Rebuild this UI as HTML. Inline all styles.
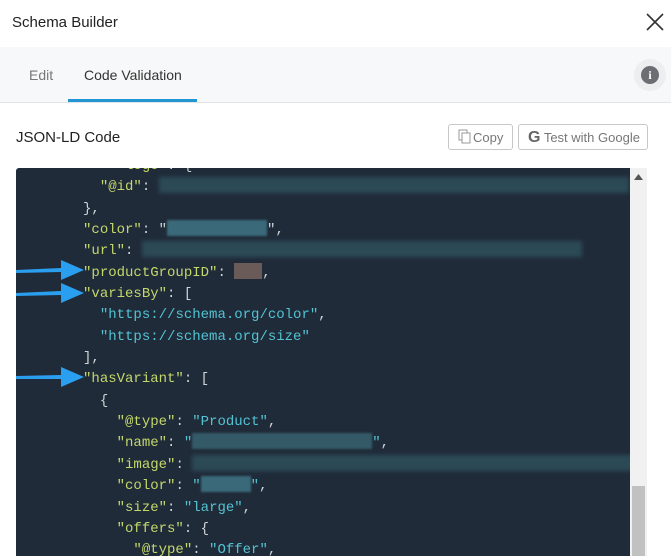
<!DOCTYPE html>
<html><head><style>
body{margin:0;width:671px;height:556px;overflow:hidden;font-family:"Liberation Sans",sans-serif;background:#fff;position:relative}
.hdr{position:absolute;left:0;top:0;width:671px;height:47px;background:#fff}
.title{position:absolute;left:12px;top:14px;font-size:15px;color:#222}
.close{position:absolute;left:645px;top:12px}
.tabs{position:absolute;left:0;top:47px;width:671px;height:55px;background:#f7f8f9;border-bottom:1px solid #e2e4e6}
.tab{position:absolute;top:20px;font-size:14px}
.ul{position:absolute;left:68px;top:52px;width:129px;height:3px;background:#2196d3}
.info{position:absolute;left:634px;top:12px;width:32px;height:32px;border-radius:50%;background:#eceeef}
.info div{position:absolute;left:7px;top:7px;width:18px;height:18px;border-radius:50%;background:#6b6f73;color:#fff;font:bold 12px "Liberation Serif",serif;text-align:center;line-height:18px}
.h2{position:absolute;left:16px;top:129px;font-size:15px;color:#222}
.btn{position:absolute;top:124px;height:26px;border:1px solid #c6c8ca;border-radius:3px;background:#fff;color:#777;font-size:13px;line-height:26px;box-sizing:border-box}
.code{position:absolute;left:16px;top:168px;width:614px;height:388px;background:#202b39;overflow:hidden;border-radius:3px 0 0 0}
pre{margin:0;position:absolute;left:-17px;top:-12px;font:14px/21.35px "Liberation Mono",monospace;color:#d0d4d8}
.k{color:#c3d86a}.s{color:#52c3d3}
.blur{display:inline-block;height:16px;vertical-align:-3px;background:#2c4a56;filter:blur(2px)}
.sb{position:absolute;left:630px;top:168px;width:17px;height:388px;background:#f1f1f1}
.thumb{position:absolute;left:2px;top:318px;width:13px;height:70px;background:#c1c1c1}
</style></head><body>
<div class="hdr"><div class="title">Schema Builder</div>
<svg class="close" width="20" height="20" viewBox="0 0 20 20"><path d="M2 2L18 18M18 2L2 18" stroke="#333" stroke-width="1.6"/></svg></div>
<div class="tabs">
<div class="tab" style="left:29px;color:#777">Edit</div>
<div class="tab" style="left:84px;color:#333">Code Validation</div>
<div class="ul"></div>
<div class="info"><div>i</div></div>
</div>
<div class="h2">JSON-LD Code</div>
<div class="btn" style="left:448px;width:65px;padding-left:8px"><svg width="16" height="16" viewBox="0 0 16 16" style="vertical-align:-3px"><rect x="2" y="1" width="8" height="10" fill="none" stroke="#999"/><rect x="5" y="4" width="8" height="10" fill="#fff" stroke="#999"/></svg>Copy</div>
<div class="btn" style="left:518px;width:130px;padding-left:9px"><b style="font-size:16px;color:#666">G</b> Test with Google</div>
<div class="code"><pre>              <span class="k">"logo"</span>: {
            <span class="k">"@id"</span>: <span class="blur" style="width:470px"></span>
          },
          <span class="k">"color"</span>: "<span class="blur" style="width:100px;background:#3a6a7a;filter:blur(1px)"></span>",
          <span class="k">"url"</span>: <span class="blur" style="width:440px"></span>
          <span class="k">"productGroupID"</span>: <span class="blur" style="width:28px;background:#6a5a58;filter:none"></span>,
          <span class="k">"variesBy"</span>: [
            <span class="s">"https://schema.org/color"</span>,
            <span class="s">"https://schema.org/size"</span>
          ],
          <span class="k">"hasVariant"</span>: [
            {
              <span class="k">"@type"</span>: <span class="s">"Product"</span>,
              <span class="k">"name"</span>: <span class="s">"<span class="blur" style="width:180px;background:#345a68;filter:blur(1px)"></span>"</span>,
              <span class="k">"image"</span>: <span class="blur" style="width:470px"></span>
              <span class="k">"color"</span>: <span class="s">"<span class="blur" style="width:50px;background:#3a6a7a;filter:blur(1px)"></span>"</span>,
              <span class="k">"size"</span>: <span class="s">"large"</span>,
              <span class="k">"offers"</span>: {
                <span class="k">"@type"</span>: <span class="s">"Offer"</span>,
</pre>
<svg style="position:absolute;left:0;top:0" width="90" height="230"><g fill="#2a9ff0"><path d="M0 102L45 100L45 92L68 102L45 112L45 104L0 105Z"/><path d="M0 125L45 123L45 115L68 125L45 135L45 127L0 128Z"/><path d="M0 208L45 207L45 199L68 209L45 219L45 211L0 211Z"/></g></svg>
</div>
<div class="sb"><svg style="position:absolute;left:4px;top:6px" width="9" height="6"><path d="M0 6L4.5 0L9 6Z" fill="#555"/></svg><div class="thumb"></div></div>
</body></html>
